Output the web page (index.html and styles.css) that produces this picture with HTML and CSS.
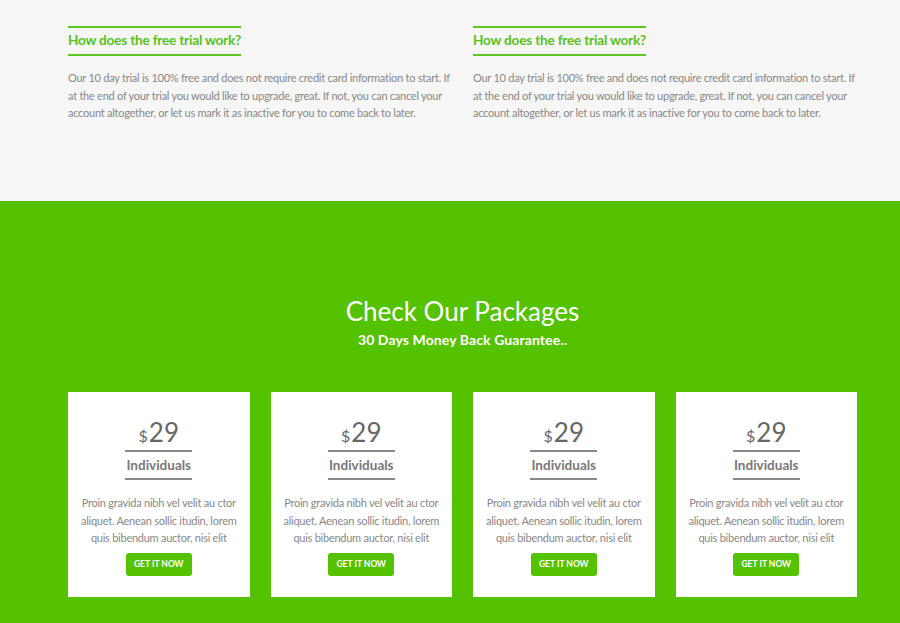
FILE: index.html
```html
<!DOCTYPE html>
<html lang="en">
<head>
    <meta charset="UTF-8">
    <meta name="viewport" content="width=device-width, initial-scale=1.0">
    <title>Packages</title>
    <link rel="stylesheet" href="styles.css">
</head>
<body>
    <!-- FAQ -->
    <section class="faq">
        <div class="container faq-grid">
            <div class="faq-item">
                <h3>How does the free trial work?</h3>
                <p>Our 10 day trial is 100% free and does not require credit card information to start. If at the end of your trial you would like to upgrade, great. If not, you can cancel your account altogether, or let us mark it as inactive for you to come back to later.</p>
            </div>
            <div class="faq-item">
                <h3>How does the free trial work?</h3>
                <p>Our 10 day trial is 100% free and does not require credit card information to start. If at the end of your trial you would like to upgrade, great. If not, you can cancel your account altogether, or let us mark it as inactive for you to come back to later.</p>
            </div>
        </div>
    </section>

    <!-- Packages -->
    <section class="packages">
        <div class="container">
            <h2>Check Our Packages</h2>
            <p class="subtitle">30 Days Money Back Guarantee..</p>

            <div class="cards">
                <div class="card">
                    <div class="price"><span class="currency">$</span>29</div>
                    <div class="plan">Individuals</div>
                    <p>Proin gravida nibh vel velit au ctor aliquet. Aenean sollic itudin, lorem quis bibendum auctor, nisi elit</p>
                    <a href="#" class="btn">GET IT NOW</a>
                </div>
                <div class="card">
                    <div class="price"><span class="currency">$</span>29</div>
                    <div class="plan">Individuals</div>
                    <p>Proin gravida nibh vel velit au ctor aliquet. Aenean sollic itudin, lorem quis bibendum auctor, nisi elit</p>
                    <a href="#" class="btn">GET IT NOW</a>
                </div>
                <div class="card">
                    <div class="price"><span class="currency">$</span>29</div>
                    <div class="plan">Individuals</div>
                    <p>Proin gravida nibh vel velit au ctor aliquet. Aenean sollic itudin, lorem quis bibendum auctor, nisi elit</p>
                    <a href="#" class="btn">GET IT NOW</a>
                </div>
                <div class="card">
                    <div class="price"><span class="currency">$</span>29</div>
                    <div class="plan">Individuals</div>
                    <p>Proin gravida nibh vel velit au ctor aliquet. Aenean sollic itudin, lorem quis bibendum auctor, nisi elit</p>
                    <a href="#" class="btn">GET IT NOW</a>
                </div>
            </div>
        </div>
    </section>
</body>
</html>
```

FILE: styles.css
```css
/* Base */
body {
    margin: 0;
    font-family: Lato, "Open Sans", sans-serif;
    color: #888;
    background-color: #55c200;
}

.container {
    width: 789px;
    margin-left: 68px;
}

/* FAQ section */
.faq {
    background-color: #f6f6f6;
    height: 201px;
    padding-top: 26px;
    box-sizing: border-box;
}

.faq-grid {
    display: grid;
    grid-template-columns: 1fr 1fr;
    gap: 21px;
}

.faq-item h3 {
    display: inline-block;
    margin: 0;
    padding: 1px 0 3px;
    font-family: Lato, sans-serif;
    font-size: 13.6px;
    font-weight: 700;
    line-height: 22px;
    letter-spacing: -0.2px;
    color: #59c11c;
    border-top: 2px solid #5dc824;
    border-bottom: 2px solid #5dc824;
}

.faq-item p {
    margin: 13px 0 0;
    font-size: 11px;
    line-height: 17.5px;
    letter-spacing: -0.25px;
    color: #888;
}

/* Packages section */
.packages {
    padding-top: 95px;
    padding-bottom: 26px;
    text-align: center;
}

.packages h2 {
    margin: 0;
    font-size: 26px;
    font-weight: 400;
    line-height: 30px;
    color: #fff;
}

.subtitle {
    margin: 5px 0 0;
    font-size: 14px;
    font-weight: 700;
    line-height: 18px;
    letter-spacing: 0.1px;
    color: #fff;
}

.cards {
    display: grid;
    grid-template-columns: repeat(4, 1fr);
    gap: 21px;
    margin-top: 43px;
}

.card {
    background-color: #fff;
    padding: 26px 8px 21px;
    display: flex;
    flex-direction: column;
    align-items: center;
}

.price {
    font-size: 26px;
    line-height: 28px;
    color: #666;
}

.currency {
    font-size: 16px;
    margin-right: 1px;
}

.plan {
    width: 67px;
    font-size: 13.5px;
    font-weight: 700;
    line-height: 26px;
    color: #777;
    border-top: 2px solid #888;
    border-bottom: 2px solid #888;
    white-space: nowrap;
    display: flex;
    justify-content: center;
}

.card p {
    margin: 14px 0 0;
    font-size: 11px;
    line-height: 17.5px;
    letter-spacing: -0.25px;
    color: #888;
}

.btn {
    margin-top: 6px;
    display: inline-block;
    width: 66px;
    height: 23px;
    line-height: 23px;
    background-color: #55c200;
    color: #fff;
    font-size: 8.5px;
    font-weight: 700;
    text-decoration: none;
    border-radius: 3px;
}
```
